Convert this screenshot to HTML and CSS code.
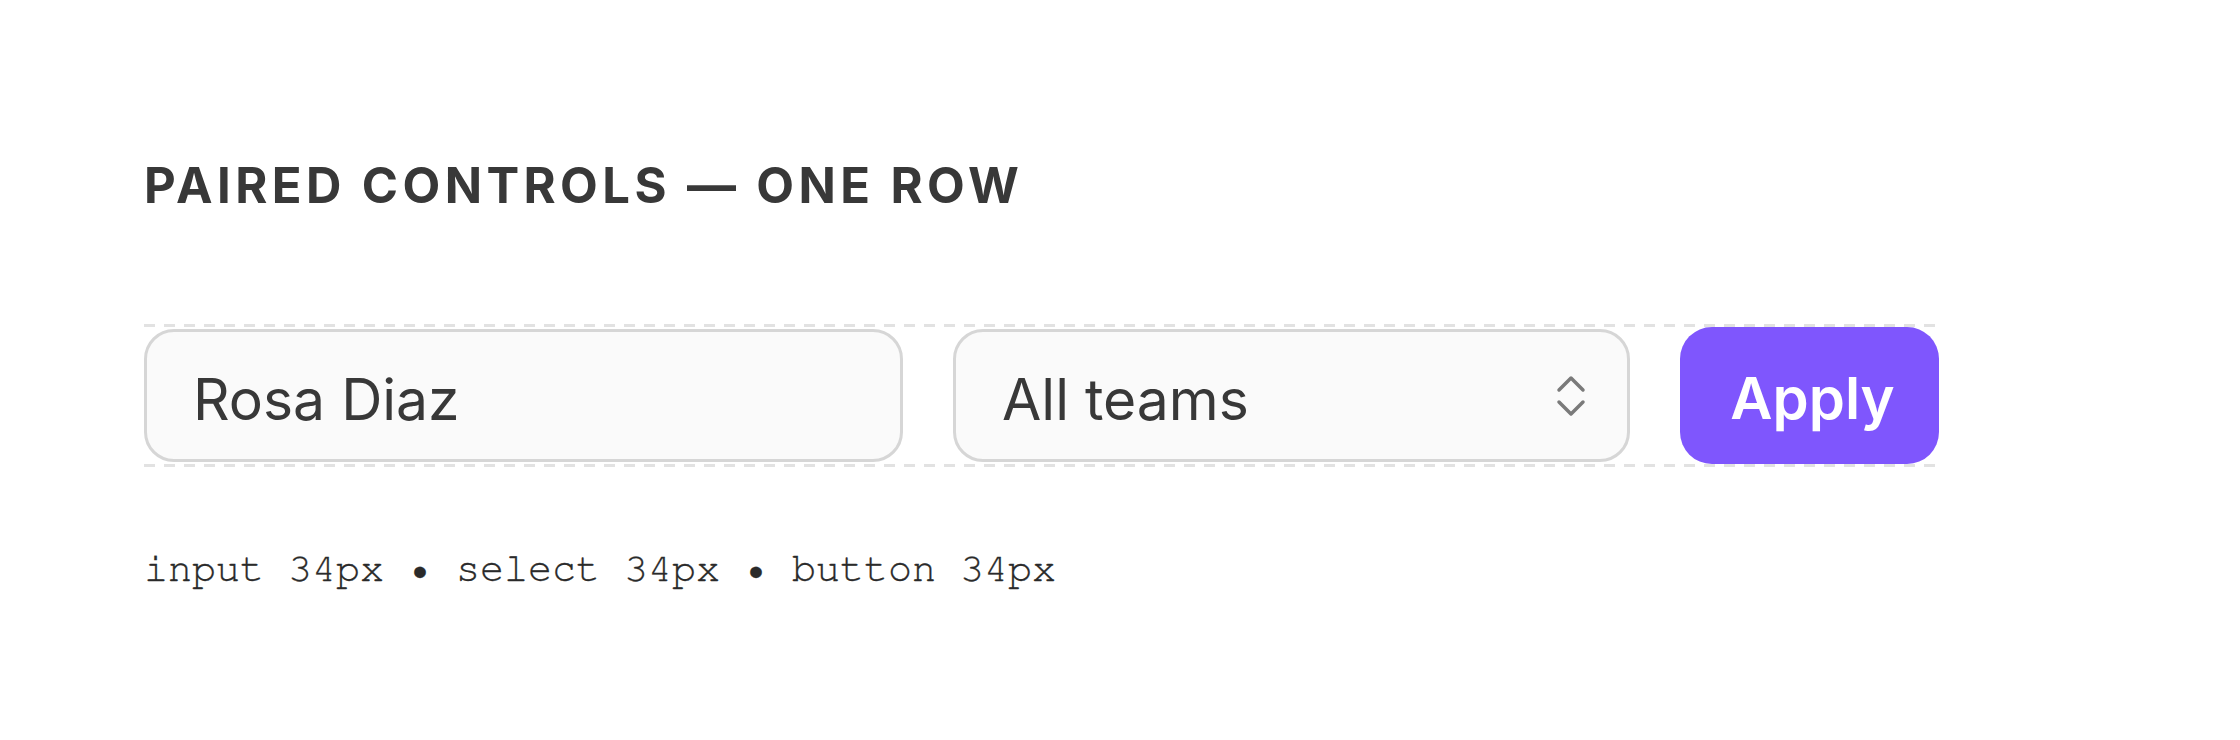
FILE: index.html
```html
<!DOCTYPE html>
<html lang="en">
    <head>
        <meta charset="utf-8">
        <meta name=viewport content="width=device-width">
        <title>Paired controls</title>
        <link rel="stylesheet" href="styles.css">
    </head>
    <body>
        <main class="page">
            <h2 class="section-title">Paired controls — one row</h2>

            <!-- All three controls share the same row and height -->
            <form class="control-row" onsubmit="return false">
                <input class="field" type="text" value="Rosa Diaz" aria-label="Name">
                <div class="select-wrap">
                    <select class="field select" aria-label="Team">
                        <option>All teams</option>
                        <option>Nine-Nine</option>
                        <option>Vulture squad</option>
                    </select>
                    <svg class="select-icon" width="32" height="46" viewBox="0 0 32 46" aria-hidden="true">
                        <path d="M4 17 16 5 28 17M4 29 16 41 28 29"/>
                    </svg>
                </div>
                <button class="apply" type="submit">Apply</button>
            </form>

            <p class="size-note">input 34px • select 34px • button 34px</p>
        </main>
    </body>
</html>
```

FILE: styles.css
```css
html {
    background-color: #fff;
    color: #383838;
    font-family: Inter, "Noto Sans", sans-serif;
}

body {
    margin: 0;
}

.page {
    display: flex;
    flex-direction: column;
    align-items: flex-start;
    padding: 156px 144px 0;
}

.section-title {
    margin: 0 0 108px;
    font-size: 49px;
    line-height: 60px;
    font-weight: 700;
    letter-spacing: 0.09em;
    text-transform: uppercase;
}

.control-row {
    display: flex;
    align-items: center;
    gap: 50px;
    margin: 0;
    padding: 3px 0;
    background:
        repeating-linear-gradient(90deg, #e2e2e2 0 11px, transparent 11px 20px) top / 100% 3px no-repeat,
        repeating-linear-gradient(90deg, #e2e2e2 0 11px, transparent 11px 20px) bottom / 100% 3px no-repeat;
}

.field {
    box-sizing: border-box;
    height: 133px;
    margin: 0;
    padding: 7px 0 0 46px;
    border: 3px solid #d6d6d6;
    border-radius: 30px;
    background-color: #fafafa;
    color: #383838;
    font-family: Inter, sans-serif;
    font-size: 57px;
    outline: none;
}

input.field {
    width: 759px;
}

.select-wrap {
    position: relative;
    width: 677px;
}

.select {
    display: block;
    width: 100%;
    padding-left: 46px;
    padding-right: 90px;
    appearance: none;
    -webkit-appearance: none;
}

.select-icon {
    position: absolute;
    right: 43px;
    top: 44px;
    fill: none;
    stroke: #7a7a7a;
    stroke-width: 3.5;
    stroke-linecap: round;
    stroke-linejoin: round;
    pointer-events: none;
}

.apply {
    box-sizing: border-box;
    width: 259px;
    height: 137px;
    padding: 4px 0 0 6px;
    border: none;
    border-radius: 32px;
    background-color: #7f56fd;
    color: #fff;
    font-family: Inter, sans-serif;
    font-size: 58px;
    font-weight: 600;
    cursor: pointer;
}

.size-note {
    margin: 79px 0 0;
    font-family: FreeMono, "Liberation Mono", monospace;
    font-size: 40px;
    line-height: 46px;
    color: #2a2a2a;
    -webkit-text-stroke: 0.3px #2a2a2a;
}
```
